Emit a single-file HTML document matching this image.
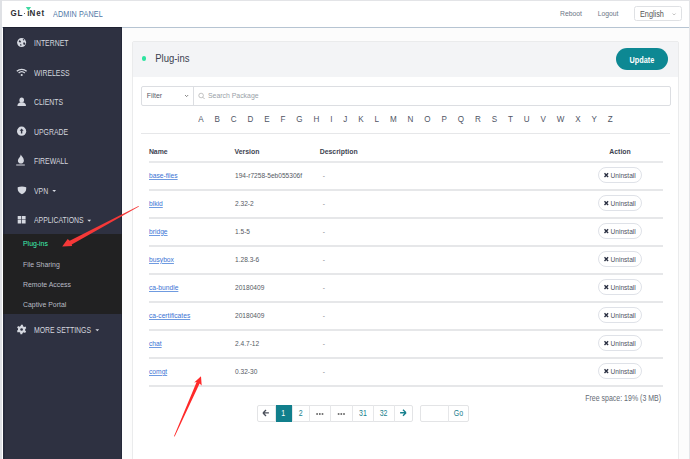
<!DOCTYPE html>
<html><head><meta charset="utf-8">
<style>
*{margin:0;padding:0;box-sizing:border-box}
html,body{width:690px;height:459px;overflow:hidden}
body{position:relative;background:#fcfcfc;font-family:"Liberation Sans",sans-serif;color:#555}
.abs{position:absolute;white-space:nowrap}
svg{position:absolute;left:0;top:0;overflow:visible}
.mi{color:#d4d7df}
.si{color:#b9bcc5}
.letters span{display:inline-block;padding:0 5.44px}
.th{font-weight:bold;color:#3d4350}
.td{color:#555a63}
.lnk{color:#3a72d4;text-decoration:underline}
.pgt{color:#17808e}
</style></head><body>
<div class="abs" style="left:0.00px;top:0.00px;width:690.00px;height:1.00px;background:#e3e4e7"></div>
<div class="abs" style="left:0.00px;top:0.00px;width:2.00px;height:459.00px;background:#dfe1e5"></div>
<div class="abs" style="left:689.00px;top:0.00px;width:1.00px;height:459.00px;background:#e4e5e8"></div>
<div class="abs" style="left:2.00px;top:1.00px;width:687.00px;height:27.00px;background:#fff;border-bottom:1px solid #b6c4d2"></div>
<div class="abs " style="left:10.50px;top:8.75px;font-size:8.00px;line-height:1;transform:scaleY(1.1);transform-origin:0 0;font-weight:bold;color:#2d2e33">G</div>
<div class="abs " style="left:17.40px;top:8.75px;font-size:8.00px;line-height:1;transform:scaleY(1.1);transform-origin:0 0;font-weight:bold;color:#2d2e33">L</div>
<div class="abs " style="left:27.20px;top:8.75px;font-size:8.00px;line-height:1;transform:scaleY(1.1);transform-origin:0 0;font-weight:bold;color:#2d2e33">ı</div>
<div class="abs " style="left:29.60px;top:8.75px;font-size:8.00px;line-height:1;transform:scaleY(1.1);transform-origin:0 0;font-weight:bold;color:#2d2e33">N</div>
<div class="abs " style="left:36.30px;top:8.75px;font-size:8.00px;line-height:1;transform:scaleY(1.1);transform-origin:0 0;font-weight:bold;color:#2d2e33">e</div>
<div class="abs " style="left:41.60px;top:8.75px;font-size:8.00px;line-height:1;transform:scaleY(1.1);transform-origin:0 0;font-weight:bold;color:#2d2e33">t</div>
<div class="abs" style="left:23.80px;top:12.70px;width:1.40px;height:1.40px;border-radius:50%;background:#333"></div>
<svg width="1" height="1"><polygon points="25.8,7 31.1,7 28.45,10.8" fill="#3fd9a2"/></svg>
<div class="abs " style="left:53.00px;top:9.84px;font-size:7.20px;line-height:1;transform:scaleY(1.15);transform-origin:0 0;color:#4f77a6;letter-spacing:0.15px">ADMIN PANEL</div>
<div class="abs " style="left:560.00px;top:10.94px;font-size:6.80px;line-height:1;color:#6b7686">Reboot</div>
<div class="abs " style="left:597.70px;top:10.94px;font-size:6.80px;line-height:1;color:#6b7686">Logout</div>
<div class="abs" style="left:634.20px;top:6.00px;width:47.60px;height:15.40px;border:1px solid #dfe1e4;border-radius:2.5px;background:#fff"></div>
<div class="abs " style="left:640.00px;top:10.09px;font-size:7.30px;line-height:1;transform:scaleY(1.15);transform-origin:0 0;color:#555">English</div>
<svg width="1" height="1"><polyline points="672.6,13.5 674.1,15 675.6,13.5" fill="none" stroke="#999" stroke-width="0.6"/></svg>
<div class="abs" style="left:2.00px;top:28.00px;width:1.00px;height:431.00px;background:#fff"></div>
<div class="abs" style="left:3.00px;top:27.00px;width:119.00px;height:432.00px;background:#2e3141"></div>
<div class="abs" style="left:3.00px;top:27.00px;width:2.00px;height:432.00px;background:#262a3b"></div>
<div class="abs" style="left:3.00px;top:27.00px;width:119.00px;height:1.00px;background:#1f2232"></div>
<div class="abs" style="left:121.00px;top:27.00px;width:1.00px;height:432.00px;background:#232738"></div>
<div class="abs" style="left:3.00px;top:234.00px;width:119.00px;height:80.00px;background:#212122"></div>
<div class="abs " style="left:34.00px;top:40.21px;font-size:6.90px;line-height:1;transform:scaleY(1.18);transform-origin:0 0;color:#d4d7df">INTERNET</div>
<div class="abs " style="left:34.00px;top:69.71px;font-size:6.90px;line-height:1;transform:scaleY(1.18);transform-origin:0 0;color:#d4d7df">WIRELESS</div>
<div class="abs " style="left:34.00px;top:99.21px;font-size:6.90px;line-height:1;transform:scaleY(1.18);transform-origin:0 0;color:#d4d7df">CLIENTS</div>
<div class="abs " style="left:34.00px;top:128.71px;font-size:6.90px;line-height:1;transform:scaleY(1.18);transform-origin:0 0;color:#d4d7df">UPGRADE</div>
<div class="abs " style="left:34.00px;top:158.21px;font-size:6.90px;line-height:1;transform:scaleY(1.18);transform-origin:0 0;color:#d4d7df">FIREWALL</div>
<div class="abs " style="left:34.00px;top:187.71px;font-size:6.90px;line-height:1;transform:scaleY(1.18);transform-origin:0 0;color:#d4d7df">VPN</div>
<div class="abs " style="left:34.00px;top:217.21px;font-size:6.90px;line-height:1;transform:scaleY(1.18);transform-origin:0 0;color:#d4d7df">APPLICATIONS</div>
<div class="abs " style="left:34.00px;top:326.86px;font-size:6.90px;line-height:1;transform:scaleY(1.18);transform-origin:0 0;color:#d4d7df">MORE SETTINGS</div>
<div class="abs " style="left:23.00px;top:241.46px;font-size:6.90px;line-height:1;color:#3ef2b2">Plug-ins</div>
<div class="abs " style="left:23.00px;top:261.76px;font-size:6.90px;line-height:1;color:#b9bcc5">File Sharing</div>
<div class="abs " style="left:23.00px;top:281.86px;font-size:6.90px;line-height:1;color:#b9bcc5">Remote Access</div>
<div class="abs " style="left:23.00px;top:301.86px;font-size:6.90px;line-height:1;color:#b9bcc5">Captive Portal</div>
<svg width="1" height="1"><circle cx="21.6" cy="42.6" r="4.5" fill="#d5d8e0"/><path d="M19.2,40.3 l1.3,0.4 l0.6,1.2 l-0.9,0.6 l-1.5,-0.5 z M22.8,38.9 l1.2,0.3 l0.2,1.1 l-1,0.2 z M23.2,42.4 l1.6,0.2 l0.6,1.3 l-1.1,1.2 l-1,-0.9 z M20.3,44.1 l1.2,0.5 l-0.3,1.5 l-1.1,-0.8 z" fill="#2e3141"/><path d="M16.8,71.2 A7.2,7.2 0 0 1 26.6,71.2" fill="none" stroke="#d5d8e0" stroke-width="1.3"/><path d="M18.6,73.1 A4.6,4.6 0 0 1 24.8,73.1" fill="none" stroke="#d5d8e0" stroke-width="1.3"/><circle cx="21.7" cy="75" r="1.05" fill="#d5d8e0"/><ellipse cx="21.7" cy="100.2" rx="2.3" ry="2.6" fill="#d5d8e0"/><path d="M17.4,106 C17.4,103.6 18.8,102.8 20.4,102.6 L23,102.6 C24.6,102.8 26,103.6 26,106 Z" fill="#d5d8e0"/><circle cx="21.6" cy="131.2" r="4.6" fill="#d5d8e0"/><path d="M21.6,128.6 L23.6,130.8 L22.3,130.8 L22.3,133.6 L20.9,133.6 L20.9,130.8 L19.6,130.8 Z" fill="#2e3141"/><path d="M20.8,154.6 C21.3,156.4 23.9,157.6 23.9,160.4 C23.9,162.4 22.6,163.6 20.9,163.6 C19.3,163.6 17.9,162.5 17.9,160.7 C17.9,158.3 20.6,157.2 20.8,154.6 Z" fill="#d5d8e0"/><rect x="16.2" y="164.5" width="8.6" height="1.0" fill="#d5d8e0"/><path d="M17.7,187.2 Q21.9,185.8 26.2,187.2 L26.2,189 Q26,192.6 21.95,194.3 Q17.9,192.6 17.7,189 Z" fill="#d5d8e0"/><rect x="17.7" y="216.0" width="3.6" height="3.5" fill="#d5d8e0"/><rect x="22.0" y="216.0" width="3.6" height="3.5" fill="#d5d8e0"/><rect x="17.7" y="220.0" width="3.6" height="3.5" fill="#d5d8e0"/><rect x="22.0" y="220.0" width="3.6" height="3.5" fill="#d5d8e0"/><polygon points="21.60,324.70 22.23,324.74 22.84,324.86 22.98,326.17 23.40,326.38 23.79,326.64 24.15,326.95 25.41,326.58 25.76,327.10 26.03,327.66 26.24,328.26 25.17,329.03 25.20,329.50 25.17,329.97 25.08,330.43 26.03,331.34 25.76,331.90 25.41,332.42 24.99,332.89 23.79,332.36 23.40,332.62 22.98,332.83 22.53,332.98 22.23,334.26 21.60,334.30 20.97,334.26 20.36,334.14 20.22,332.83 19.80,332.62 19.41,332.36 19.05,332.05 17.79,332.42 17.44,331.90 17.17,331.34 16.96,330.74 18.03,329.97 18.00,329.50 18.03,329.03 18.12,328.57 17.17,327.66 17.44,327.10 17.79,326.58 18.21,326.11 19.41,326.64 19.80,326.38 20.22,326.17 20.67,326.02 20.97,324.74" fill="#d5d8e0"/><circle cx="21.6" cy="329.5" r="1.3" fill="#2e3141"/><polygon points="52.3,190.1 56.1,190.1 54.2,192.0" fill="#d5d8e0"/><polygon points="87.3,219.8 91.1,219.8 89.2,221.7" fill="#d5d8e0"/><polygon points="95.4,329.3 99.2,329.3 97.3,331.2" fill="#d5d8e0"/></svg>
<div class="abs" style="left:132.00px;top:40.50px;width:547.00px;height:430.00px;background:#fff;border:1px solid #eaebec;border-radius:2px"></div>
<div class="abs" style="left:133.00px;top:41.50px;width:545.00px;height:35.50px;background:#f3f4f6"></div>
<div class="abs" style="left:141.80px;top:56.00px;width:4.60px;height:4.60px;border-radius:50%;background:#2ee3a0"></div>
<div class="abs " style="left:155.20px;top:52.89px;font-size:9.50px;line-height:1;transform:scaleY(1.12);transform-origin:0 0;color:#3b4150">Plug-ins</div>
<div class="abs" style="left:616.00px;top:48.30px;width:52.00px;height:22.00px;border-radius:11px;background:#0d8893"></div>
<div class="abs " style="left:629.60px;top:56.06px;font-size:7.30px;line-height:1;transform:scaleY(1.18);transform-origin:0 0;color:#fff;font-weight:bold">Update</div>
<div class="abs" style="left:141.00px;top:85.50px;width:529.50px;height:20.00px;border:1px solid #dcdee2;border-radius:2px;background:#fff"></div>
<div class="abs" style="left:193.20px;top:86.00px;width:1.00px;height:19.00px;background:#dcdee2"></div>
<div class="abs " style="left:146.80px;top:93.36px;font-size:6.90px;line-height:1;color:#555b66">Filter</div>
<svg width="1" height="1"><polyline points="185,95 186.6,96.6 188.2,95" fill="none" stroke="#555" stroke-width="0.7"/><circle cx="201.1" cy="95.5" r="2.3" fill="none" stroke="#aaa" stroke-width="0.7"/><line x1="202.8" y1="97.2" x2="204.6" y2="99" stroke="#aaa" stroke-width="0.8"/></svg>
<div class="abs " style="left:208.00px;top:93.36px;font-size:6.90px;line-height:1;color:#9a9fa8">Search Package</div>
<div class="abs" style="left:141.00px;top:133.00px;width:529.00px;height:1.00px;background:#e6e7e9"></div>
<div class="abs letters" style="left:141px;top:114.67px;width:529px;text-align:center;font-size:8.1px;line-height:1;color:#4f5565;transform:scaleY(1.12);transform-origin:0 0"><span>A</span><span>B</span><span>C</span><span>D</span><span>E</span><span>F</span><span>G</span><span>H</span><span>I</span><span>J</span><span>K</span><span>L</span><span>M</span><span>N</span><span>O</span><span>P</span><span>Q</span><span>R</span><span>S</span><span>T</span><span>U</span><span>V</span><span>W</span><span>X</span><span>Y</span><span>Z</span></div>
<div class="abs " style="left:148.90px;top:148.51px;font-size:6.90px;line-height:1;font-weight:bold;color:#3d4350">Name</div>
<div class="abs " style="left:234.50px;top:148.51px;font-size:6.90px;line-height:1;font-weight:bold;color:#3d4350">Version</div>
<div class="abs " style="left:319.70px;top:148.51px;font-size:6.90px;line-height:1;font-weight:bold;color:#3d4350">Description</div>
<div class="abs " style="left:609.30px;top:148.51px;font-size:6.90px;line-height:1;font-weight:bold;color:#3d4350">Action</div>
<div class="abs" style="left:149.00px;top:161.20px;width:513.50px;height:1.60px;background:#e8e9eb"></div>
<div class="abs " style="left:149.00px;top:172.68px;font-size:6.70px;line-height:1;color:#3a72d4;text-decoration:underline;text-decoration-thickness:0.7px;text-decoration-color:#6f9be0">base-files</div>
<div class="abs " style="left:235.00px;top:172.76px;font-size:6.60px;line-height:1;color:#555a63">194-r7258-5eb055306f</div>
<div class="abs " style="left:322.80px;top:172.76px;font-size:6.60px;line-height:1;color:#80858d">-</div>
<div class="abs" style="left:598.20px;top:167.15px;width:43.50px;height:16.00px;border:1px solid #dfe2e8;border-radius:8px;background:#fff"></div>
<div class="abs " style="left:610.50px;top:173.01px;font-size:6.60px;line-height:1;color:#4e5464">Uninstall</div>
<svg width="1" height="1"><path d="M604.50,173.35 l3.6,3.6 M608.10,173.35 l-3.6,3.6" stroke="#2a3042" stroke-width="1.4"/></svg>
<div class="abs" style="left:149.00px;top:189.30px;width:513.50px;height:1.30px;background:#e6e7e9"></div>
<div class="abs " style="left:149.00px;top:200.68px;font-size:6.70px;line-height:1;color:#3a72d4;text-decoration:underline;text-decoration-thickness:0.7px;text-decoration-color:#6f9be0">blkid</div>
<div class="abs " style="left:235.00px;top:200.76px;font-size:6.60px;line-height:1;color:#555a63">2.32-2</div>
<div class="abs " style="left:322.80px;top:200.76px;font-size:6.60px;line-height:1;color:#80858d">-</div>
<div class="abs" style="left:598.20px;top:195.15px;width:43.50px;height:16.00px;border:1px solid #dfe2e8;border-radius:8px;background:#fff"></div>
<div class="abs " style="left:610.50px;top:201.01px;font-size:6.60px;line-height:1;color:#4e5464">Uninstall</div>
<svg width="1" height="1"><path d="M604.50,201.35 l3.6,3.6 M608.10,201.35 l-3.6,3.6" stroke="#2a3042" stroke-width="1.4"/></svg>
<div class="abs" style="left:149.00px;top:217.30px;width:513.50px;height:1.30px;background:#e6e7e9"></div>
<div class="abs " style="left:149.00px;top:228.68px;font-size:6.70px;line-height:1;color:#3a72d4;text-decoration:underline;text-decoration-thickness:0.7px;text-decoration-color:#6f9be0">bridge</div>
<div class="abs " style="left:235.00px;top:228.76px;font-size:6.60px;line-height:1;color:#555a63">1.5-5</div>
<div class="abs " style="left:322.80px;top:228.76px;font-size:6.60px;line-height:1;color:#80858d">-</div>
<div class="abs" style="left:598.20px;top:223.15px;width:43.50px;height:16.00px;border:1px solid #dfe2e8;border-radius:8px;background:#fff"></div>
<div class="abs " style="left:610.50px;top:229.01px;font-size:6.60px;line-height:1;color:#4e5464">Uninstall</div>
<svg width="1" height="1"><path d="M604.50,229.35 l3.6,3.6 M608.10,229.35 l-3.6,3.6" stroke="#2a3042" stroke-width="1.4"/></svg>
<div class="abs" style="left:149.00px;top:245.30px;width:513.50px;height:1.30px;background:#e6e7e9"></div>
<div class="abs " style="left:149.00px;top:256.68px;font-size:6.70px;line-height:1;color:#3a72d4;text-decoration:underline;text-decoration-thickness:0.7px;text-decoration-color:#6f9be0">busybox</div>
<div class="abs " style="left:235.00px;top:256.76px;font-size:6.60px;line-height:1;color:#555a63">1.28.3-6</div>
<div class="abs " style="left:322.80px;top:256.76px;font-size:6.60px;line-height:1;color:#80858d">-</div>
<div class="abs" style="left:598.20px;top:251.15px;width:43.50px;height:16.00px;border:1px solid #dfe2e8;border-radius:8px;background:#fff"></div>
<div class="abs " style="left:610.50px;top:257.01px;font-size:6.60px;line-height:1;color:#4e5464">Uninstall</div>
<svg width="1" height="1"><path d="M604.50,257.35 l3.6,3.6 M608.10,257.35 l-3.6,3.6" stroke="#2a3042" stroke-width="1.4"/></svg>
<div class="abs" style="left:149.00px;top:273.30px;width:513.50px;height:1.30px;background:#e6e7e9"></div>
<div class="abs " style="left:149.00px;top:284.68px;font-size:6.70px;line-height:1;color:#3a72d4;text-decoration:underline;text-decoration-thickness:0.7px;text-decoration-color:#6f9be0">ca-bundle</div>
<div class="abs " style="left:235.00px;top:284.76px;font-size:6.60px;line-height:1;color:#555a63">20180409</div>
<div class="abs " style="left:322.80px;top:284.76px;font-size:6.60px;line-height:1;color:#80858d">-</div>
<div class="abs" style="left:598.20px;top:279.15px;width:43.50px;height:16.00px;border:1px solid #dfe2e8;border-radius:8px;background:#fff"></div>
<div class="abs " style="left:610.50px;top:285.01px;font-size:6.60px;line-height:1;color:#4e5464">Uninstall</div>
<svg width="1" height="1"><path d="M604.50,285.35 l3.6,3.6 M608.10,285.35 l-3.6,3.6" stroke="#2a3042" stroke-width="1.4"/></svg>
<div class="abs" style="left:149.00px;top:301.30px;width:513.50px;height:1.30px;background:#e6e7e9"></div>
<div class="abs " style="left:149.00px;top:312.68px;font-size:6.70px;line-height:1;color:#3a72d4;text-decoration:underline;text-decoration-thickness:0.7px;text-decoration-color:#6f9be0">ca-certificates</div>
<div class="abs " style="left:235.00px;top:312.76px;font-size:6.60px;line-height:1;color:#555a63">20180409</div>
<div class="abs " style="left:322.80px;top:312.76px;font-size:6.60px;line-height:1;color:#80858d">-</div>
<div class="abs" style="left:598.20px;top:307.15px;width:43.50px;height:16.00px;border:1px solid #dfe2e8;border-radius:8px;background:#fff"></div>
<div class="abs " style="left:610.50px;top:313.01px;font-size:6.60px;line-height:1;color:#4e5464">Uninstall</div>
<svg width="1" height="1"><path d="M604.50,313.35 l3.6,3.6 M608.10,313.35 l-3.6,3.6" stroke="#2a3042" stroke-width="1.4"/></svg>
<div class="abs" style="left:149.00px;top:329.30px;width:513.50px;height:1.30px;background:#e6e7e9"></div>
<div class="abs " style="left:149.00px;top:340.68px;font-size:6.70px;line-height:1;color:#3a72d4;text-decoration:underline;text-decoration-thickness:0.7px;text-decoration-color:#6f9be0">chat</div>
<div class="abs " style="left:235.00px;top:340.76px;font-size:6.60px;line-height:1;color:#555a63">2.4.7-12</div>
<div class="abs " style="left:322.80px;top:340.76px;font-size:6.60px;line-height:1;color:#80858d">-</div>
<div class="abs" style="left:598.20px;top:335.15px;width:43.50px;height:16.00px;border:1px solid #dfe2e8;border-radius:8px;background:#fff"></div>
<div class="abs " style="left:610.50px;top:341.01px;font-size:6.60px;line-height:1;color:#4e5464">Uninstall</div>
<svg width="1" height="1"><path d="M604.50,341.35 l3.6,3.6 M608.10,341.35 l-3.6,3.6" stroke="#2a3042" stroke-width="1.4"/></svg>
<div class="abs" style="left:149.00px;top:357.30px;width:513.50px;height:1.30px;background:#e6e7e9"></div>
<div class="abs " style="left:149.00px;top:368.68px;font-size:6.70px;line-height:1;color:#3a72d4;text-decoration:underline;text-decoration-thickness:0.7px;text-decoration-color:#6f9be0">comgt</div>
<div class="abs " style="left:235.00px;top:368.76px;font-size:6.60px;line-height:1;color:#555a63">0.32-30</div>
<div class="abs " style="left:322.80px;top:368.76px;font-size:6.60px;line-height:1;color:#80858d">-</div>
<div class="abs" style="left:598.20px;top:363.15px;width:43.50px;height:16.00px;border:1px solid #dfe2e8;border-radius:8px;background:#fff"></div>
<div class="abs " style="left:610.50px;top:369.01px;font-size:6.60px;line-height:1;color:#4e5464">Uninstall</div>
<svg width="1" height="1"><path d="M604.50,369.35 l3.6,3.6 M608.10,369.35 l-3.6,3.6" stroke="#2a3042" stroke-width="1.4"/></svg>
<div class="abs" style="left:149.00px;top:385.30px;width:513.50px;height:1.30px;background:#e6e7e9"></div>
<div class="abs " style="left:585.20px;top:393.81px;font-size:7.00px;line-height:1;transform:scaleY(1.18);transform-origin:0 0;color:#656b75">Free space: 19% (3 MB)</div>
<div class="abs" style="left:256.50px;top:404.50px;width:156.00px;height:17.00px;border:1px solid #e3e4e6;border-radius:2px;background:#fff"></div>
<div class="abs" style="left:274.80px;top:404.80px;width:17.60px;height:16.80px;background:#117f8c"></div>
<div class="abs" style="left:275.00px;top:404.50px;width:1.00px;height:17.00px;background:#e6e7e9"></div>
<div class="abs" style="left:292.40px;top:404.50px;width:1.00px;height:17.00px;background:#e6e7e9"></div>
<div class="abs" style="left:309.30px;top:404.50px;width:1.00px;height:17.00px;background:#e6e7e9"></div>
<div class="abs" style="left:330.20px;top:404.50px;width:1.00px;height:17.00px;background:#e6e7e9"></div>
<div class="abs" style="left:352.40px;top:404.50px;width:1.00px;height:17.00px;background:#e6e7e9"></div>
<div class="abs" style="left:372.80px;top:404.50px;width:1.00px;height:17.00px;background:#e6e7e9"></div>
<div class="abs" style="left:393.50px;top:404.50px;width:1.00px;height:17.00px;background:#e6e7e9"></div>
<div class="abs " style="left:281.30px;top:408.86px;font-size:7.00px;line-height:1;transform:scaleY(1.18);transform-origin:0 0;color:#fff">1</div>
<div class="abs " style="left:298.70px;top:408.86px;font-size:7.00px;line-height:1;transform:scaleY(1.18);transform-origin:0 0;color:#17808e">2</div>
<div class="abs " style="left:359.00px;top:408.86px;font-size:7.00px;line-height:1;transform:scaleY(1.18);transform-origin:0 0;color:#17808e">31</div>
<div class="abs " style="left:379.70px;top:408.86px;font-size:7.00px;line-height:1;transform:scaleY(1.18);transform-origin:0 0;color:#17808e">32</div>
<svg width="1" height="1"><path d="M263,412.9 L266,409.9 M263,412.9 L266,415.9 M263.2,412.9 L268.9,412.9" stroke="#4a4f5a" stroke-width="1.35" fill="none"/><path d="M406,412.8 L403,409.8 M406,412.8 L403,415.8 M405.8,412.8 L400.1,412.8" stroke="#17808e" stroke-width="1.4" fill="none"/><rect x="316.30" y="413.2" width="1.6" height="1.6" fill="#555"/><rect x="319.00" y="413.2" width="1.6" height="1.6" fill="#555"/><rect x="321.70" y="413.2" width="1.6" height="1.6" fill="#555"/><rect x="337.80" y="413.2" width="1.6" height="1.6" fill="#555"/><rect x="340.50" y="413.2" width="1.6" height="1.6" fill="#555"/><rect x="343.20" y="413.2" width="1.6" height="1.6" fill="#555"/></svg>
<div class="abs" style="left:420.20px;top:404.50px;width:49.00px;height:17.00px;border:1px solid #e3e4e6;border-radius:2px;background:#fff"></div>
<div class="abs" style="left:447.50px;top:404.50px;width:1.00px;height:17.00px;background:#e6e7e9"></div>
<div class="abs " style="left:453.80px;top:408.86px;font-size:7.00px;line-height:1;transform:scaleY(1.18);transform-origin:0 0;color:#17808e">Go</div>
<svg width="1" height="1"><polygon points="138.5,206 139,206.6 71.7,244.6 72.1,246 62.2,246.6 67.7,239.1 69.7,240.7" fill="#f53838"/><polygon points="174,436.3 196.6,382 194.2,382.4 201,376.2 201.7,385.4 199.6,383.4 174.7,436.5" fill="#ff2a2a"/></svg>
</body></html>
